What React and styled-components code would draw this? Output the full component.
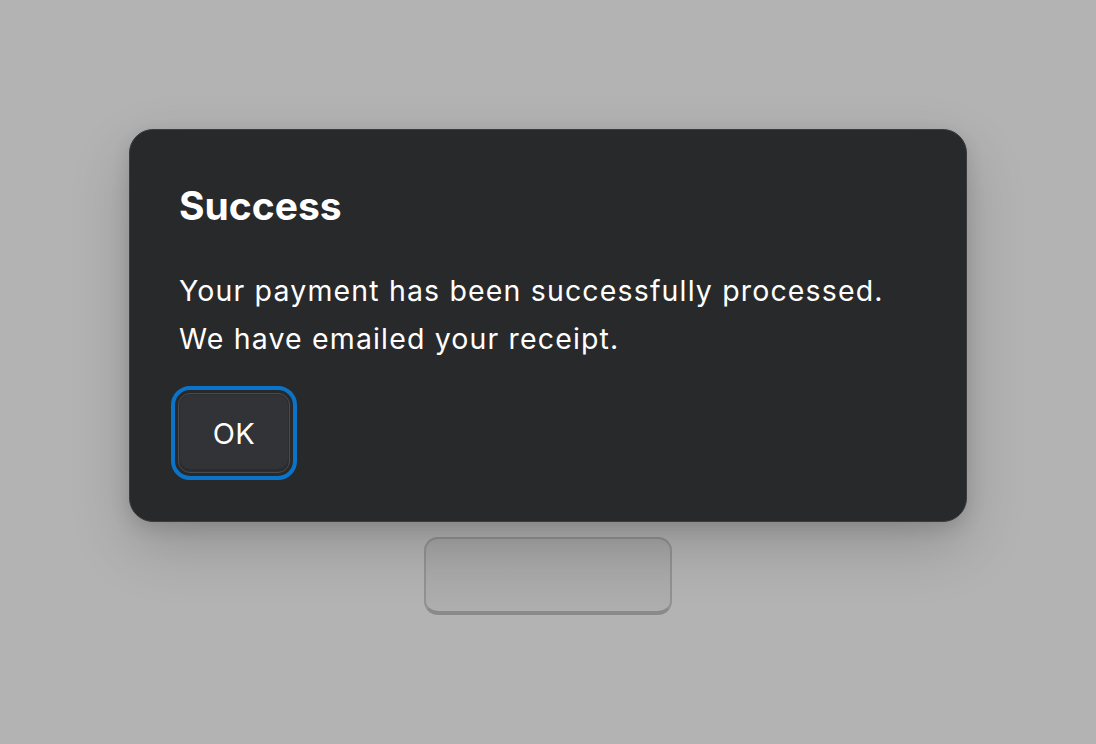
import React from "react";
import styled, { createGlobalStyle } from "styled-components";

const Global = createGlobalStyle`
  html, body { margin: 0; padding: 0; background: #b3b3b3; }
  body { font-family: Inter, "Noto Sans", sans-serif; -webkit-font-smoothing: antialiased; }
`;

const Page = styled.div`
  width: 1096px;
  height: 744px;
  box-sizing: border-box;
  padding-top: 129px;
  display: flex;
  flex-direction: column;
  align-items: center;
  gap: 15px;
  background: #b3b3b3;
  overflow: hidden;
`;

const Dialog = styled.div`
  width: 838px;
  height: 393px;
  box-sizing: border-box;
  padding: 0 48px;
  background: #28292b;
  border: 1px solid #3b3c3f;
  border-radius: 24px;
  box-shadow: 0 24px 60px rgba(0, 0, 0, 0.18), 0 6px 18px rgba(0, 0, 0, 0.12);
  display: flex;
  flex-direction: column;
  color: #ffffff;
  position: relative;
  z-index: 1;
`;

const Title = styled.h2`
  margin: 52px 0 0 1px;
  font-size: 39px;
  font-weight: 700;
  line-height: 48px;
  letter-spacing: 0;
`;

const Body = styled.p`
  margin: 37px 0 0 1px;
  font-size: 28.5px;
  line-height: 48px;
  font-weight: 400;
  letter-spacing: 1.15px;
`;

const OkButton = styled.button`
  margin-top: 30px;
  align-self: flex-start;
  width: 112px;
  height: 80px;
  box-sizing: border-box;
  background: #323336;
  border: 1px solid #4a4b4e;
  border-radius: 12px;
  box-shadow: inset 0 0 0 1px #2c2d30, inset 0 -2px 0 1px #2a2b2e;
  color: #ffffff;
  font-family: inherit;
  font-size: 29px;
  letter-spacing: 0.5px;
  outline: 4px solid #0b74c9;
  outline-offset: 3px;
  display: flex;
  align-items: center;
  justify-content: center;
  padding: 0;
`;

const GhostButton = styled.div`
  width: 248px;
  height: 78px;
  box-sizing: border-box;
  border: 2px solid #929292;
  border-bottom: 4px solid #8a8a8a;
  border-radius: 14px;
  background: linear-gradient(#a7a7a7, #aeaeae);
`;

export default function App() {
  return (
    <>
      <Global />
      <Page>
        <Dialog role="dialog">
          <Title>Success</Title>
          <Body>
            Your payment has been successfully processed.
            <br />
            We have emailed your receipt.
          </Body>
          <OkButton>OK</OkButton>
        </Dialog>
        <GhostButton />
      </Page>
    </>
  );
}
